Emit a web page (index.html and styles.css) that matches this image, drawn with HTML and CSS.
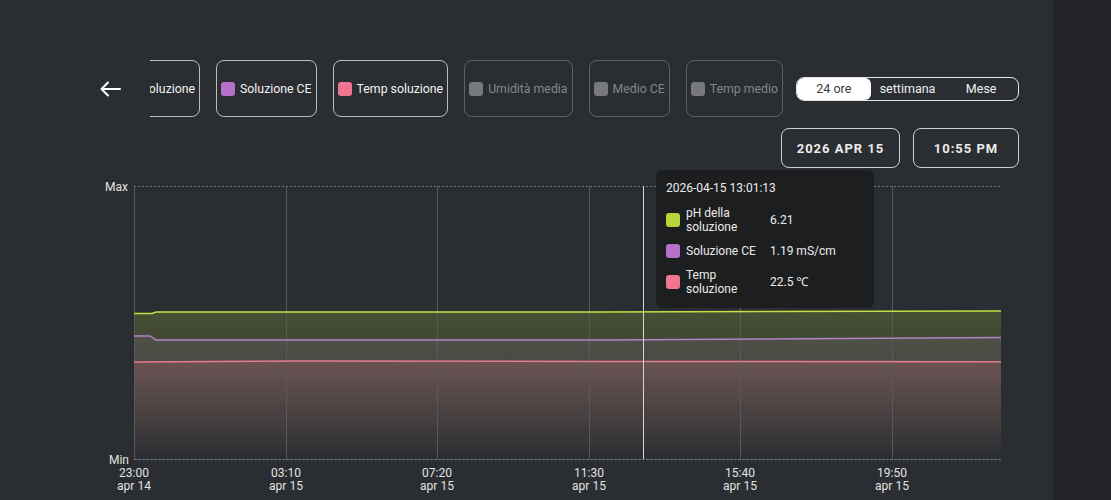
FILE: index.html
```html
<!DOCTYPE html>
<html lang="it">
<head>
  <meta charset="UTF-8" />
  <meta name="viewport" content="width=device-width, initial-scale=1.0" />
  <title>Grafico soluzione</title>
  <link rel="stylesheet" href="styles.css">
</head>
<body>
  <main class="pannello">
    <div class="barra">
      <svg class="indietro" viewBox="0 0 22 16" aria-label="Indietro">
        <path d="M21 8H2.5M9 1.5L2.5 8L9 14.5" fill="none" stroke="#fff" stroke-width="2" stroke-linecap="round" stroke-linejoin="round"/>
      </svg>

      <div class="chips">
        <div class="chip"><span class="quadro verde"></span>pH della soluzione</div>
        <div class="chip"><span class="quadro viola"></span>Soluzione CE</div>
        <div class="chip"><span class="quadro rosa"></span>Temp soluzione</div>
        <div class="chip spento"><span class="quadro"></span>Umidità media</div>
        <div class="chip spento"><span class="quadro"></span>Medio CE</div>
        <div class="chip spento"><span class="quadro"></span>Temp medio</div>
      </div>

      <div class="periodo">
        <span class="attivo">24 ore</span>
        <span>settimana</span>
        <span>Mese</span>
      </div>
    </div>

    <div class="quando">
      <button class="btn-data">2026 APR 15</button>
      <button class="btn-ora">10:55 PM</button>
    </div>

    <svg class="grafico" width="930" height="324" viewBox="90 176 930 324">
      <defs>
        <linearGradient id="fVerde" x1="0" y1="0" x2="0" y2="1">
          <stop offset="0" stop-color="#b9d63e" stop-opacity="0.2"/>
          <stop offset="1" stop-color="#b9d63e" stop-opacity="0"/>
        </linearGradient>
        <linearGradient id="fViola" x1="0" y1="0" x2="0" y2="1">
          <stop offset="0" stop-color="#b07cc6" stop-opacity="0.14"/>
          <stop offset="1" stop-color="#b07cc6" stop-opacity="0"/>
        </linearGradient>
        <linearGradient id="fRosa" x1="0" y1="0" x2="0" y2="1">
          <stop offset="0" stop-color="#e8798e" stop-opacity="0.2"/>
          <stop offset="1" stop-color="#e8798e" stop-opacity="0"/>
        </linearGradient>
      </defs>

      <!-- aree sotto le linee -->
      <path d="M134 313.5L152 313.5L156 312L600 312L1001 311L1001 459.5L134 459.5Z" fill="url(#fVerde)"/>
      <path d="M134 336L150 336L156 340L600 340L1001 337.5L1001 459.5L134 459.5Z" fill="url(#fViola)"/>
      <path d="M134 362L300 361L600 361.5L1001 361.8L1001 459.5L134 459.5Z" fill="url(#fRosa)"/>

      <!-- griglia -->
      <g stroke="#56595d" stroke-width="1">
        <line x1="134.5" y1="186" x2="134.5" y2="459"/>
        <line x1="286.5" y1="186" x2="286.5" y2="459"/>
        <line x1="437.5" y1="186" x2="437.5" y2="459"/>
        <line x1="589.5" y1="186" x2="589.5" y2="459"/>
        <line x1="740.5" y1="186" x2="740.5" y2="459"/>
        <line x1="892.5" y1="186" x2="892.5" y2="459"/>
      </g>
      <line x1="134" y1="186.5" x2="1001" y2="186.5" stroke="#6f7276" stroke-dasharray="2 2"/>
      <line x1="134" y1="459.5" x2="1001" y2="459.5" stroke="#74777a" stroke-dasharray="3 1"/>

      <!-- linee dati -->
      <path d="M134 313.5L152 313.5L156 312L600 312L1001 311" fill="none" stroke="#c6df45" stroke-width="1.5"/>
      <path d="M134 336L150 336L156 340L600 340L1001 337.5" fill="none" stroke="#b283c6" stroke-width="1.5"/>
      <path d="M134 362L300 361L600 361.5L1001 361.8" fill="none" stroke="#e77c90" stroke-width="1.5"/>

      <!-- cursore -->
      <line x1="643.5" y1="186" x2="643.5" y2="459" stroke="#d6d6d6" stroke-width="1"/>

      <g class="assi">
        <text x="128" y="191" text-anchor="end">Max</text>
        <text x="129" y="464" text-anchor="end">Min</text>
        <text x="134" y="477" text-anchor="middle">23:00</text>
        <text x="134" y="490" text-anchor="middle">apr 14</text>
        <text x="286" y="477" text-anchor="middle">03:10</text>
        <text x="286" y="490" text-anchor="middle">apr 15</text>
        <text x="437" y="477" text-anchor="middle">07:20</text>
        <text x="437" y="490" text-anchor="middle">apr 15</text>
        <text x="589" y="477" text-anchor="middle">11:30</text>
        <text x="589" y="490" text-anchor="middle">apr 15</text>
        <text x="740" y="477" text-anchor="middle">15:40</text>
        <text x="740" y="490" text-anchor="middle">apr 15</text>
        <text x="892" y="477" text-anchor="middle">19:50</text>
        <text x="892" y="490" text-anchor="middle">apr 15</text>
      </g>
    </svg>

    <div class="tooltip">
      <div class="tt-titolo">2026-04-15 13:01:13</div>
      <div class="tt-riga">
        <span class="quadro verde"></span>
        <span class="tt-nome">pH della soluzione</span>
        <span class="tt-valore">6.21</span>
      </div>
      <div class="tt-riga">
        <span class="quadro viola"></span>
        <span class="tt-nome">Soluzione CE</span>
        <span class="tt-valore">1.19 mS/cm</span>
      </div>
      <div class="tt-riga">
        <span class="quadro rosa"></span>
        <span class="tt-nome">Temp soluzione</span>
        <span class="tt-valore">22.5 ℃</span>
      </div>
    </div>
  </main>
  <aside class="lato"></aside>
</body>
</html>
```

FILE: styles.css
```css
* {
  box-sizing: border-box;
}

body {
  margin: 0;
  height: 500px;
  overflow: hidden;
  display: flex;
  background: #222326;
  color: #fff;
  font-family: Roboto, 'Noto Sans', sans-serif;
}

.pannello {
  position: relative;
  width: 1053px;
  flex-shrink: 0;
  background: #2a2d31;
  padding: 60px 34px 0 99px;
}

.lato {
  flex: 1;
  background: #222326;
}

.barra {
  display: flex;
  align-items: center;
}

.indietro {
  width: 22px;
  height: 16px;
  margin-right: 29px;
  flex-shrink: 0;
}

.chips {
  width: 633px;
  flex-shrink: 0;
  overflow: hidden;
  display: flex;
  justify-content: flex-end;
  gap: 16px;
}

.chip {
  flex-shrink: 0;
  height: 57px;
  display: flex;
  align-items: center;
  gap: 5px;
  padding: 0 4px;
  border: 1.5px solid #bdbdbd;
  border-radius: 8px;
  font-size: 12.3px;
  white-space: nowrap;
  color: #f2f2f2;
}

.chip.spento {
  border-color: #5f6265;
  color: #85878a;
}

.quadro {
  width: 14px;
  height: 14px;
  border-radius: 3px;
  flex-shrink: 0;
  background: #77797c;
}

.quadro.verde { background: #b8d43a; }
.quadro.viola { background: #b571c9; }
.quadro.rosa { background: #ef7590; }

.periodo {
  margin-left: 13px;
  width: 223px;
  height: 24px;
  display: flex;
  border: 1.5px solid #e4e4e4;
  border-radius: 8px;
  overflow: hidden;
  font-size: 12.5px;
}

.periodo span {
  flex: 1;
  display: flex;
  align-items: center;
  justify-content: center;
  color: #f0f0f0;
}

.periodo span.attivo {
  background: #fff;
  color: #3b3b3b;
  border-radius: 6px;
}

.quando {
  display: flex;
  justify-content: flex-end;
  gap: 13px;
  margin-top: 11px;
}

.quando button {
  height: 40px;
  background: transparent;
  border: 1.5px solid #cfcfcf;
  border-radius: 8px;
  color: #ececec;
  font-family: inherit;
  font-size: 13px;
  font-weight: 700;
  letter-spacing: 1px;
}

.btn-data { width: 119px; }
.btn-ora { width: 106px; }

.grafico {
  display: block;
  margin: 8px 0 0 -9px;
}

.assi text {
  font-family: Roboto, 'Noto Sans', sans-serif;
  font-size: 12px;
  fill: #e2e2e2;
}

.tooltip {
  position: absolute;
  left: 656px;
  top: 170px;
  width: 218px;
  height: 138px;
  padding: 11px 10px;
  background: #1c1e20;
  border-radius: 6px;
  font-size: 12px;
  line-height: 14px;
  color: #ececec;
}

.tt-titolo {
  margin-bottom: 11px;
}

.tt-riga {
  display: flex;
  align-items: center;
  margin-bottom: 10px;
}

.tt-riga .quadro {
  margin-right: 6px;
}

.tt-nome {
  width: 76px;
  margin-right: 8px;
}
```
